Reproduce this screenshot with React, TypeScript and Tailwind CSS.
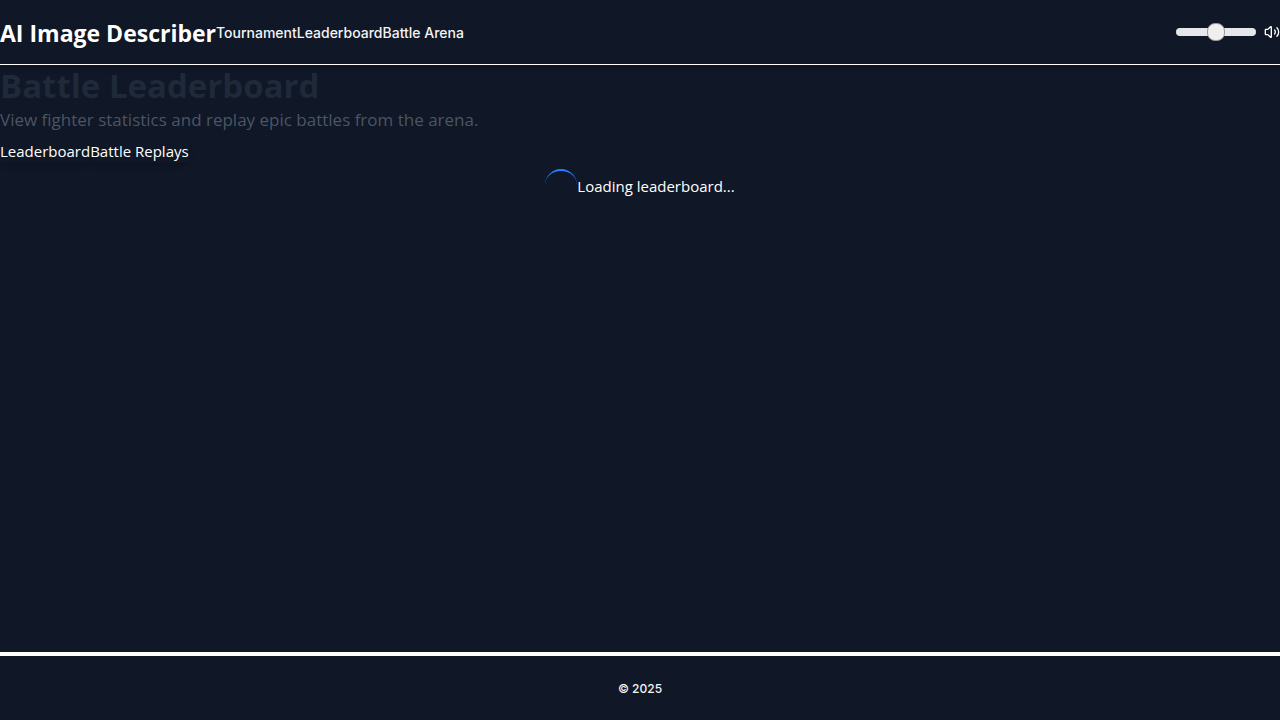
import { useState } from "react";
import { Volume2 } from "lucide-react";

const links = ["Tournament", "Leaderboard", "Battle Arena"];
const tabs = ["Leaderboard", "Battle Replays"];

export default function App() {
  const [volume, setVolume] = useState(50);
  return (
    <div className="flex min-h-screen flex-col bg-[#101726] font-['Open_Sans','Noto_Sans',sans-serif] text-base text-white">
      <header className="flex h-[65px] items-center justify-between border-b border-white shadow-md">
        <div className="flex items-center pt-0.5">
          <a href="#home" className="text-[23px] leading-8 font-bold">AI Image Describer</a>
          <nav className="flex font-['Inter',sans-serif] text-sm font-medium text-gray-100">
            {links.map((l) => (
              <a key={l} href="#nav">{l}</a>
            ))}
          </nav>
        </div>
        <div className="flex items-center gap-2">
          <input
            type="range"
            aria-label="Volume"
            min={0}
            max={100}
            value={volume}
            onChange={(e) => setVolume(Number(e.target.value))}
            className="h-2 w-20 cursor-pointer appearance-none rounded-lg bg-gray-200 [&::-webkit-slider-thumb]:size-[18px] [&::-webkit-slider-thumb]:appearance-none [&::-webkit-slider-thumb]:rounded-lg [&::-webkit-slider-thumb]:border [&::-webkit-slider-thumb]:border-[#999999] [&::-webkit-slider-thumb]:bg-[#efefef]"
          />
          <button type="button" aria-label="Mute">
            <Volume2 size={16} />
          </button>
        </div>
      </header>
      <main className="flex-1">
        <h1 className="text-[33px] leading-[42px] font-bold text-[#1e2939]">Battle Leaderboard</h1>
        <p className="text-[17px] leading-[26px] text-[#4a5565]">View fighter statistics and replay epic battles from the arena.</p>
        <div className="flex py-1.5 text-[15px] leading-6">
          {tabs.map((t) => (
            <button key={t} type="button" className="shadow-md">{t}</button>
          ))}
        </div>
        <div className="flex items-center justify-center text-[15px]">
          <div className="size-8 rounded-full border-t-2 border-[#2b7fff]" />
          <span className="pt-0.5">Loading leaderboard...</span>
        </div>
      </main>
      <footer className="flex h-[68px] items-center justify-center border-t-4 border-white pt-0.5 font-['Inter',sans-serif] text-xs font-medium text-gray-100">
        © 2025
      </footer>
    </div>
  );
}
